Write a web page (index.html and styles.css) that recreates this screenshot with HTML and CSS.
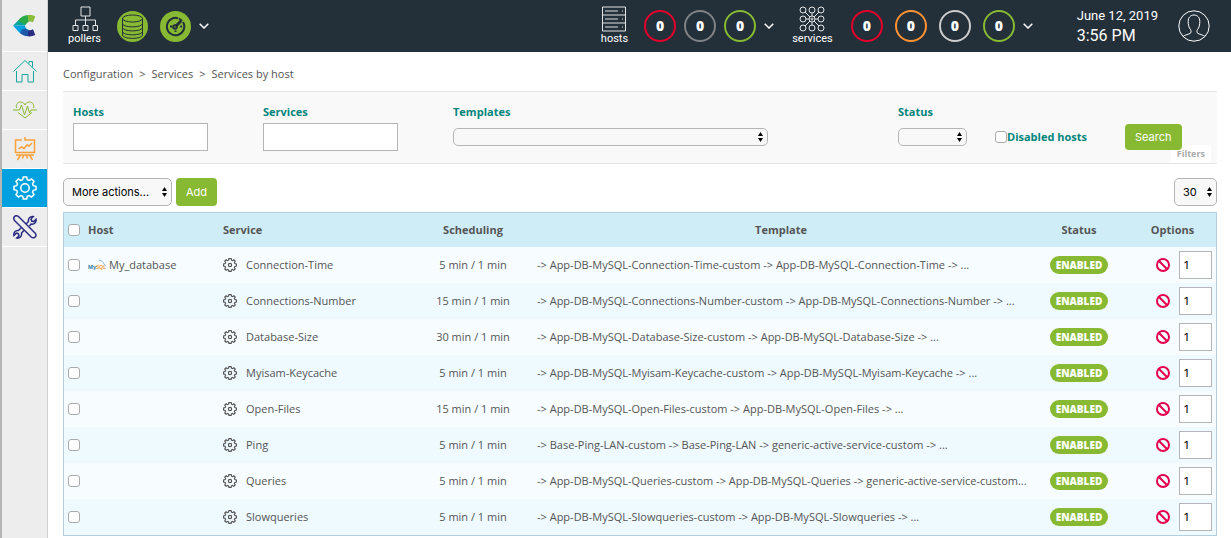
FILE: index.html
```html
<!DOCTYPE html>
<html lang="en">
  <head>
    <meta charset="UTF-8" />
    <meta name="viewport" content="width=device-width, initial-scale=1.0" />
    <title>Services by host</title>
    <link rel="stylesheet" href="styles.css" />
  </head>
  <body>
    <!-- shared icons -->
    <svg class="sprite" aria-hidden="true">
      <symbol id="gear" viewBox="-12 -12 24 24">
        <path d="M-2.3-8.3L-1.7-11 1.7-11 2.3-8.3 4.2-7.5 6.6-9 9-6.6 7.5-4.2 8.3-2.3 11-1.7 11 1.7 8.3 2.3 7.5 4.2 9 6.6 6.6 9 4.2 7.5 2.3 8.3 1.7 11-1.7 11-2.3 8.3-4.2 7.5-6.6 9-9 6.6-7.5 4.2-8.3 2.3-11 1.7-11-1.7-8.3-2.3-7.5-4.2-9-6.6-6.6-9-4.2-7.5Z" />
        <circle r="4.2" />
      </symbol>
      <symbol id="gear-small" viewBox="-12 -12 24 24">
        <path d="M-2.6-8.3L-1.9-11 1.9-11 2.6-8.3 4.2-7.5 6.6-9 9-6.6 7.5-4.2 8.3-2.6 11-1.9 11 1.9 8.3 2.6 7.5 4.2 9 6.6 6.6 9 4.2 7.5 2.6 8.3 1.9 11-1.9 11-2.6 8.3-4.2 7.5-6.6 9-9 6.6-7.5 4.2-8.3 2.6-11 1.9-11-1.9-8.3-2.6-7.5-4.2-9-6.6-6.6-9-4.2-7.5Z" />
        <circle r="2.8" />
      </symbol>
      <symbol id="ban" viewBox="0 0 14 14">
        <circle cx="7" cy="7" r="6" />
        <path d="M2.8 2.8l8.4 8.4" />
      </symbol>
      <symbol id="chevron" viewBox="0 0 10 6">
        <path d="M.7.7L5 5 9.3.7" />
      </symbol>
    </svg>

    <div class="layout">
      <nav class="sidebar" aria-label="Main menu">
        <a class="logo" href="#" aria-label="Home page">
          <svg width="24" height="22" viewBox="0 0 24 22">
            <path fill="#00a499" d="M0 10.500L8 3l6 4.500-2 3z" />
            <path fill="#2baa4a" d="M5 5.800C8 2 11 .3 15 0l1 6.500-4 3z" />
            <path fill="#88bd3a" d="M14.500 0c3-.3 5.500 0 7.800 1.200L20 7.300c-1.500-.9-3-1.200-4.500-.6z" />
            <path fill="#009fdf" d="M0 10.500h12c.3 2.500 1.500 3.800 4 4.500L14 21c-5-.5-8-3.500-10-6z" />
            <path fill="#1e5aa8" d="M9 14.500l3.800-1c1 1.200 2 1.600 3.700 1.900L15 21.300c-3-.3-6-1.500-8-3.300z" />
            <path fill="#2b2d83" d="M15.500 15.200c1.700.2 3-.1 4.500-1l2.300 5.800c-2.300 1.200-4.800 1.600-7.800 1.300z" />
          </svg>
        </a>
        <a class="nav-item home" href="#" aria-label="Home">
          <svg width="24" height="24" viewBox="0 0 24 24">
            <path d="M.5 12.500L12 1.500l11.500 11M16 4.500V2.500h3.500v5.300M3.500 12v11h5.500v-7.500h6V23h5.500V12" />
          </svg>
        </a>
        <a class="nav-item monitoring" href="#" aria-label="Monitoring">
          <svg width="24" height="24" viewBox="0 0 24 24">
            <path d="M3.500 10C2.500 6 5 4 7.500 4 10 4 11.500 5.500 12 7c.5-1.500 2-3 4.500-3S21.500 6 20.500 10M5 14.500L12 20l7-5.500M0 12h6.500L8.500 7l3 10 3-9 2 7 1.500-3h6" />
          </svg>
        </a>
        <a class="nav-item reporting" href="#" aria-label="Reporting">
          <svg width="24" height="24" viewBox="0 0 24 24">
            <path d="M9 3H2.500v12.500h19V3H12V0M3 18h18M7.500 18l-3 5M16.500 18l3 5M10.500 18l-1 3.500M13.500 18l1 3.500M5.500 12l3-2 2.500 1.500 3-3.500 2 1L19 6" />
          </svg>
        </a>
        <a class="nav-item configuration active" href="#" aria-label="Configuration">
          <svg width="24" height="24"><use href="#gear" /></svg>
        </a>
        <a class="nav-item administration" href="#" aria-label="Administration">
          <svg width="24" height="24" viewBox="0 0 24 24">
            <path d="M1.500 1.500C3 .2 4.500.6 6 2l16 16c1.500 1.500 1 3 .2 4s-2.500 1.300-4 0L2 6C.5 4.500.4 3 1.500 1.500zM13.500 8.500l2-2c-.6-3 1.500-5.500 4.800-5l-2.300 2.600.7 2 2 .5 2.300-2.400c.6 3-1.800 5.500-5 4.800l-1.500 2M8.500 12.500l-3 3c-3-.6-5.200 2-4.600 5l2.500-2.400 2 .6.600 2-2.300 2.400c3 .6 5.300-2 4.800-4.800l2.500-3" />
          </svg>
        </a>
      </nav>

      <div class="page">
        <header class="topbar">
          <div class="top-group">
            <a class="top-link" href="#">
              <svg width="26" height="26" viewBox="0 0 26 26">
                <path d="M9 1h9v9H9zM13.500 10v9M3.500 19v-5h20v5M1 19.500h5v5H1zM11 19.500h5v5h-5zM21 19.500h4.500v5H21z" />
              </svg>
              pollers
            </a>
            <span class="poller-state database">
              <svg width="31" height="31" viewBox="0 0 31 31">
                <ellipse cx="15.500" cy="7.500" rx="10" ry="3.500" />
                <path d="M5.500 7.500v16.500c0 4.500 20 4.500 20 0V7.500M5.500 12.500c0 4.500 20 4.500 20 0M5.500 16.500c0 4.500 20 4.500 20 0M5.500 20.500c0 4.500 20 4.500 20 0" />
              </svg>
            </span>
            <span class="poller-state latency">
              <svg width="31" height="31" viewBox="0 0 31 31">
                <path d="M18 7.200A8.700 8.700 0 1 0 23 11" />
                <path d="M19 7.500l3 2.500M10 15.500h2M20 15.500h2M15.500 21v-1.500" />
                <circle cx="15" cy="16" r="1.800" />
                <path class="needle" d="M16 15l5-5" />
              </svg>
            </span>
            <button class="toggle" type="button" aria-label="Show pollers">
              <svg width="10" height="6"><use href="#chevron" /></svg>
            </button>
          </div>

          <div class="top-group hosts">
            <a class="top-link" href="#">
              <svg width="26" height="26" viewBox="0 0 26 26">
                <path d="M1.500 1h23v24h-23zM1.500 9h23M1.500 17h23M4 5h13M4 13h13M4 21h13M21 5h1M21 13h1M21 21h1" />
              </svg>
              hosts
            </a>
            <a class="ring red" href="#">0</a>
            <a class="ring dark-gray" href="#">0</a>
            <a class="ring green" href="#">0</a>
            <button class="toggle" type="button" aria-label="Show hosts">
              <svg width="10" height="6"><use href="#chevron" /></svg>
            </button>
          </div>

          <div class="top-group services">
            <a class="top-link" href="#">
              <svg width="26" height="26" viewBox="0 0 26 26">
                <path d="M6 6l5 5M20 6l-5 5M6 20l5-5M20 20l-5-5M13 7v3M13 16v3M7 13h3M16 13h3" />
                <circle cx="4" cy="4" r="3" /><circle cx="13" cy="4" r="3" /><circle cx="22" cy="4" r="3" />
                <circle cx="4" cy="13" r="3" /><circle cx="13" cy="13" r="3" /><circle cx="22" cy="13" r="3" />
                <circle cx="4" cy="22" r="3" /><circle cx="13" cy="22" r="3" /><circle cx="22" cy="22" r="3" />
                <circle cx="13" cy="13" r="1" />
              </svg>
              services
            </a>
            <a class="ring red" href="#">0</a>
            <a class="ring orange" href="#">0</a>
            <a class="ring light-gray" href="#">0</a>
            <a class="ring green" href="#">0</a>
            <button class="toggle" type="button" aria-label="Show services">
              <svg width="10" height="6"><use href="#chevron" /></svg>
            </button>
          </div>

          <div class="clock">
            <div class="date">June 12, 2019</div>
            <div class="time">3:56 PM</div>
          </div>
          <button class="user" type="button" aria-label="User menu">
            <svg width="32" height="32" viewBox="0 0 32 32">
              <circle cx="16" cy="16" r="15.200" />
              <path d="M5 26.500c1.500-1.500 5-2 7-3 1.500-.8 1.300-2.500.5-4-1.800-2-2.300-5-2.300-8C10.200 7.500 12.500 5 16 5s5.800 2.500 5.800 6.500c0 3-.5 6-2.300 8-.8 1.500-1 3.200.5 4 2 1 5.500 1.500 7 3" />
            </svg>
          </button>
        </header>

        <main class="content">
          <nav class="breadcrumb" aria-label="Breadcrumb">
            <a href="#">Configuration</a>
            <span>&gt;</span>
            <a href="#">Services</a>
            <span>&gt;</span>
            <a href="#">Services by host</a>
          </nav>

          <form class="filters">
            <div class="field">
              <label for="hosts">Hosts</label>
              <div class="control"><input type="text" id="hosts" /></div>
            </div>
            <div class="field">
              <label for="services">Services</label>
              <div class="control"><input type="text" id="services" /></div>
            </div>
            <div class="field">
              <label for="templates">Templates</label>
              <div class="control">
                <select class="small-select templates" id="templates"><option></option></select>
              </div>
            </div>
            <div class="field">
              <label for="status">Status</label>
              <div class="control">
                <select class="small-select status" id="status"><option></option></select>
              </div>
            </div>
            <div class="check-field">
              <input type="checkbox" id="disabled" />
              <label for="disabled">Disabled hosts</label>
            </div>
            <div class="search-field">
              <button class="btn" type="button">Search</button>
            </div>
            <span class="filters-tab">Filters</span>
          </form>

          <div class="toolbar">
            <select class="big-select actions" aria-label="Actions"><option>More actions...</option></select>
            <button class="btn add" type="button">Add</button>
            <select class="big-select limit" aria-label="Rows per page"><option>30</option></select>
          </div>

          <table class="list">
            <colgroup>
              <col class="col-check" />
              <col class="col-host" />
              <col class="col-service" />
              <col class="col-scheduling" />
              <col class="col-template" />
              <col class="col-status" />
              <col class="col-options" />
            </colgroup>
            <thead>
              <tr>
                <th><input type="checkbox" aria-label="Select all" /></th>
                <th class="left">Host</th>
                <th class="left">Service</th>
                <th>Scheduling</th>
                <th>Template</th>
                <th>Status</th>
                <th>Options</th>
              </tr>
            </thead>
            <tbody>
              <tr>
                <td><input type="checkbox" aria-label="Select Connection-Time" /></td>
                <td>
                  <a class="host" href="#">
                    <svg width="18" height="12" viewBox="0 0 18 12">
                      <text class="my" x="0" y="10">My</text>
                      <text class="sql" x="8" y="10">SQL</text>
                      <path d="M11 1c3 .5 4 2 5 4l1.500 2" />
                    </svg>
                    My_database
                  </a>
                </td>
                <td><a class="service" href="#"><svg width="14" height="14"><use href="#gear-small" /></svg>Connection-Time</a></td>
                <td class="center">5 min / 1 min</td>
                <td class="template">-&gt; App-DB-MySQL-Connection-Time-custom -&gt; App-DB-MySQL-Connection-Time -&gt; ...</td>
                <td class="center"><span class="badge">ENABLED</span></td>
                <td><div class="options"><button type="button" aria-label="Disable"><svg width="14" height="14"><use href="#ban" /></svg></button><input type="text" value="1" aria-label="Copies" /></div></td>
              </tr>
              <tr>
                <td><input type="checkbox" aria-label="Select Connections-Number" /></td>
                <td></td>
                <td><a class="service" href="#"><svg width="14" height="14"><use href="#gear-small" /></svg>Connections-Number</a></td>
                <td class="center">15 min / 1 min</td>
                <td class="template">-&gt; App-DB-MySQL-Connections-Number-custom -&gt; App-DB-MySQL-Connections-Number -&gt; ...</td>
                <td class="center"><span class="badge">ENABLED</span></td>
                <td><div class="options"><button type="button" aria-label="Disable"><svg width="14" height="14"><use href="#ban" /></svg></button><input type="text" value="1" aria-label="Copies" /></div></td>
              </tr>
              <tr>
                <td><input type="checkbox" aria-label="Select Database-Size" /></td>
                <td></td>
                <td><a class="service" href="#"><svg width="14" height="14"><use href="#gear-small" /></svg>Database-Size</a></td>
                <td class="center">30 min / 1 min</td>
                <td class="template">-&gt; App-DB-MySQL-Database-Size-custom -&gt; App-DB-MySQL-Database-Size -&gt; ...</td>
                <td class="center"><span class="badge">ENABLED</span></td>
                <td><div class="options"><button type="button" aria-label="Disable"><svg width="14" height="14"><use href="#ban" /></svg></button><input type="text" value="1" aria-label="Copies" /></div></td>
              </tr>
              <tr>
                <td><input type="checkbox" aria-label="Select Myisam-Keycache" /></td>
                <td></td>
                <td><a class="service" href="#"><svg width="14" height="14"><use href="#gear-small" /></svg>Myisam-Keycache</a></td>
                <td class="center">5 min / 1 min</td>
                <td class="template">-&gt; App-DB-MySQL-Myisam-Keycache-custom -&gt; App-DB-MySQL-Myisam-Keycache -&gt; ...</td>
                <td class="center"><span class="badge">ENABLED</span></td>
                <td><div class="options"><button type="button" aria-label="Disable"><svg width="14" height="14"><use href="#ban" /></svg></button><input type="text" value="1" aria-label="Copies" /></div></td>
              </tr>
              <tr>
                <td><input type="checkbox" aria-label="Select Open-Files" /></td>
                <td></td>
                <td><a class="service" href="#"><svg width="14" height="14"><use href="#gear-small" /></svg>Open-Files</a></td>
                <td class="center">15 min / 1 min</td>
                <td class="template">-&gt; App-DB-MySQL-Open-Files-custom -&gt; App-DB-MySQL-Open-Files -&gt; ...</td>
                <td class="center"><span class="badge">ENABLED</span></td>
                <td><div class="options"><button type="button" aria-label="Disable"><svg width="14" height="14"><use href="#ban" /></svg></button><input type="text" value="1" aria-label="Copies" /></div></td>
              </tr>
              <tr>
                <td><input type="checkbox" aria-label="Select Ping" /></td>
                <td></td>
                <td><a class="service" href="#"><svg width="14" height="14"><use href="#gear-small" /></svg>Ping</a></td>
                <td class="center">5 min / 1 min</td>
                <td class="template">-&gt; Base-Ping-LAN-custom -&gt; Base-Ping-LAN -&gt; generic-active-service-custom -&gt; ...</td>
                <td class="center"><span class="badge">ENABLED</span></td>
                <td><div class="options"><button type="button" aria-label="Disable"><svg width="14" height="14"><use href="#ban" /></svg></button><input type="text" value="1" aria-label="Copies" /></div></td>
              </tr>
              <tr>
                <td><input type="checkbox" aria-label="Select Queries" /></td>
                <td></td>
                <td><a class="service" href="#"><svg width="14" height="14"><use href="#gear-small" /></svg>Queries</a></td>
                <td class="center">5 min / 1 min</td>
                <td class="template">-&gt; App-DB-MySQL-Queries-custom -&gt; App-DB-MySQL-Queries -&gt; generic-active-service-custom...</td>
                <td class="center"><span class="badge">ENABLED</span></td>
                <td><div class="options"><button type="button" aria-label="Disable"><svg width="14" height="14"><use href="#ban" /></svg></button><input type="text" value="1" aria-label="Copies" /></div></td>
              </tr>
              <tr>
                <td><input type="checkbox" aria-label="Select Slowqueries" /></td>
                <td></td>
                <td><a class="service" href="#"><svg width="14" height="14"><use href="#gear-small" /></svg>Slowqueries</a></td>
                <td class="center">5 min / 1 min</td>
                <td class="template">-&gt; App-DB-MySQL-Slowqueries-custom -&gt; App-DB-MySQL-Slowqueries -&gt; ...</td>
                <td class="center"><span class="badge">ENABLED</span></td>
                <td><div class="options"><button type="button" aria-label="Disable"><svg width="14" height="14"><use href="#ban" /></svg></button><input type="text" value="1" aria-label="Copies" /></div></td>
              </tr>
            </tbody>
          </table>
        </main>
      </div>
    </div>
  </body>
</html>
```
FILE: styles.css
```css
* {
  box-sizing: border-box;
}
body {
  margin: 0;
  font-family: "Open Sans", sans-serif;
  font-size: 11px;
  line-height: 16px;
  color: #555;
  background: #fff;
}
a {
  color: inherit;
  text-decoration: none;
}
button {
  border: none;
  background: none;
  padding: 0;
  cursor: pointer;
}
svg {
  display: block;
  flex: none;
  fill: none;
  stroke: currentColor;
}
.sprite {
  position: absolute;
  width: 0;
  height: 0;
}
.layout {
  display: flex;
  min-height: 100vh;
}

/* Sidebar */
.sidebar {
  flex: none;
  width: 48px;
  background: #ededed;
  border-left: 2px solid #b5b5b5;
  border-right: 1px solid #d0d0d0;
}
.logo,
.nav-item {
  display: flex;
  align-items: center;
  justify-content: center;
  height: 39px;
  border-bottom: 1px solid #fff;
}
.logo {
  height: 52px;
}
.logo svg {
  stroke: none;
}
.home {
  color: #14a79d;
}
.monitoring {
  color: #88b933;
}
.reporting {
  color: #f9a13a;
}
.administration {
  color: #2b2d83;
}
.nav-item.active {
  color: #fff;
  background: #00a1de;
}
.reporting svg,
.configuration svg,
.administration svg {
  stroke-width: 1.5;
}

/* Top bar */
.page {
  flex: 1;
  min-width: 0;
}
.topbar {
  display: flex;
  align-items: center;
  height: 52px;
  padding: 0 21px 0 20px;
  color: #fff;
  background: #232f39;
  font-family: Roboto, sans-serif;
}
.top-group {
  display: flex;
  align-items: center;
}
.top-link {
  display: flex;
  flex-direction: column;
  align-items: center;
  font-size: 11px;
  line-height: 14px;
}
.top-link svg {
  color: #e3e5e6;
}
.poller-state {
  margin-left: 12px;
  border-radius: 50%;
  color: #232f39;
  background: #88b933;
}
.database {
  margin-left: 16px;
}
.latency svg {
  stroke-width: 2;
}
.latency .needle {
  stroke-width: 3;
}
.toggle {
  margin-left: 8px;
  color: #fff;
}
.toggle svg {
  stroke-width: 1.5;
}
.hosts {
  margin-left: auto;
}
.services {
  margin-left: 18px;
}
.ring {
  display: flex;
  align-items: center;
  justify-content: center;
  width: 32px;
  height: 32px;
  margin-left: 8px;
  border: 2px solid;
  border-radius: 50%;
  font-family: "Open Sans", sans-serif;
  font-size: 14px;
  font-weight: 800;
}
.services .ring {
  margin-left: 12px;
}
.top-link + .ring {
  margin-left: 16px;
}
.services .top-link + .ring {
  margin-left: 18px;
}
.red {
  border-color: #e4002b;
}
.orange {
  border-color: #ff9232;
}
.dark-gray {
  border-color: #818285;
}
.light-gray {
  border-color: #cdcdcd;
}
.green {
  border-color: #88b933;
}
.clock {
  margin-left: 44px;
  line-height: 20px;
}
.date {
  font-size: 13px;
}
.time {
  font-size: 16px;
}
.user {
  margin-left: 20px;
  color: #fff;
}

/* Content */
.content {
  padding: 14px 14px 2px 15px;
}
.breadcrumb {
  display: flex;
  gap: 6px;
}

/* Form controls */
input,
select {
  margin: 0;
  border: 1px solid #b5b5b5;
  color: #000;
  background-color: #fff;
  font-family: Inter, sans-serif;
  font-size: 11px;
}
input[type="checkbox"] {
  appearance: none;
  flex: none;
  display: block;
  width: 12px;
  height: 12px;
  border-color: #aaa;
  border-radius: 3px;
}
input[type="checkbox"]:checked {
  background: #88b933;
}
select {
  appearance: none;
  border-radius: 5px;
  background: #f8f8f8
    url("data:image/svg+xml,%3Csvg xmlns='http://www.w3.org/2000/svg' width='5' height='10'%3E%3Cpath d='M0 4l2.500-4L5 4zM0 6l2.500 4L5 6z'/%3E%3C/svg%3E")
    no-repeat right 4px center;
}
.small-select {
  height: 18px;
}
.templates {
  width: 315px;
}
.status {
  width: 69px;
}
.big-select {
  height: 28px;
  padding: 0 8px;
}
.actions {
  width: 109px;
}
.limit {
  width: 43px;
  margin-left: auto;
}
.btn {
  height: 26px;
  padding: 0 10px;
  border-radius: 4px;
  color: #fff;
  background: #88b933;
  font-family: Inter, sans-serif;
  font-size: 11px;
}

/* Filters */
.filters {
  position: relative;
  display: grid;
  grid-template-columns: 190fr 190fr 445fr 97fr 130fr 82fr;
  margin-top: 9px;
  padding: 12px 10px;
  border: solid #e5e5e5;
  border-width: 1px 0;
  background: #f9f9f9;
}
.filters label {
  display: block;
  font-weight: bold;
  color: #00857b;
}
.control {
  display: flex;
  align-items: center;
  height: 28px;
  margin-top: 3px;
}
.control input {
  width: 135px;
  height: 28px;
}
.check-field {
  display: flex;
  align-items: center;
  height: 28px;
  margin-top: 19px;
}
.search-field {
  z-index: 1;
  margin-top: 20px;
}
.filters-tab {
  position: absolute;
  right: 6px;
  bottom: 0;
  padding: 1px 6px;
  color: #aaa;
  background: #fff;
  font-size: 9px;
  font-weight: bold;
}

/* Toolbar */
.toolbar {
  display: flex;
  gap: 4px;
  margin: 14px 0 6px;
}
.add {
  height: 28px;
}

/* List */
.list {
  width: 100%;
  table-layout: fixed;
  border-collapse: separate;
  border-spacing: 0;
  border: 1px solid #b5cfe0;
}
.col-check {
  width: 24px;
}
.col-host {
  width: 135px;
}
.col-service {
  width: 190px;
}
.col-scheduling {
  width: 120px;
}
.col-status {
  width: 100px;
}
.col-options {
  width: 87px;
}
.list th {
  height: 34px;
  padding: 0;
  background: #cfedf7;
}
.list td {
  height: 36px;
  padding: 0;
  background: #eefaff;
}
.list tr:nth-child(odd) td {
  background: #f7fdff;
}
.list input[type="checkbox"] {
  margin-left: 4px;
}
.list .left {
  text-align: left;
}
.list .center {
  text-align: center;
}
.list .template {
  padding-left: 4px;
  overflow: hidden;
  white-space: nowrap;
}
.host,
.service {
  display: flex;
  align-items: center;
}
.host {
  gap: 3px;
}
.service {
  gap: 9px;
}
.service svg {
  stroke-width: 2;
}
.host text {
  font-family: "Liberation Sans", sans-serif;
  font-size: 6px;
  font-weight: bold;
  stroke: none;
}
.host .my {
  fill: #337ba5;
}
.host .sql {
  font-size: 5px;
  fill: #f29a3f;
}
.host path {
  stroke: #8bb8d1;
}
.badge {
  display: inline-block;
  padding: 1px 6px;
  border-radius: 9px;
  color: #fff;
  background: #88b933;
  font-size: 10px;
  font-weight: 800;
}
.options {
  display: flex;
  align-items: center;
  justify-content: flex-end;
  gap: 9px;
  padding-right: 4px;
}
.options button {
  color: #e5004d;
}
.options button svg {
  stroke-width: 2;
}
.options input {
  width: 33px;
  height: 28px;
  padding: 0 4px;
}
```
